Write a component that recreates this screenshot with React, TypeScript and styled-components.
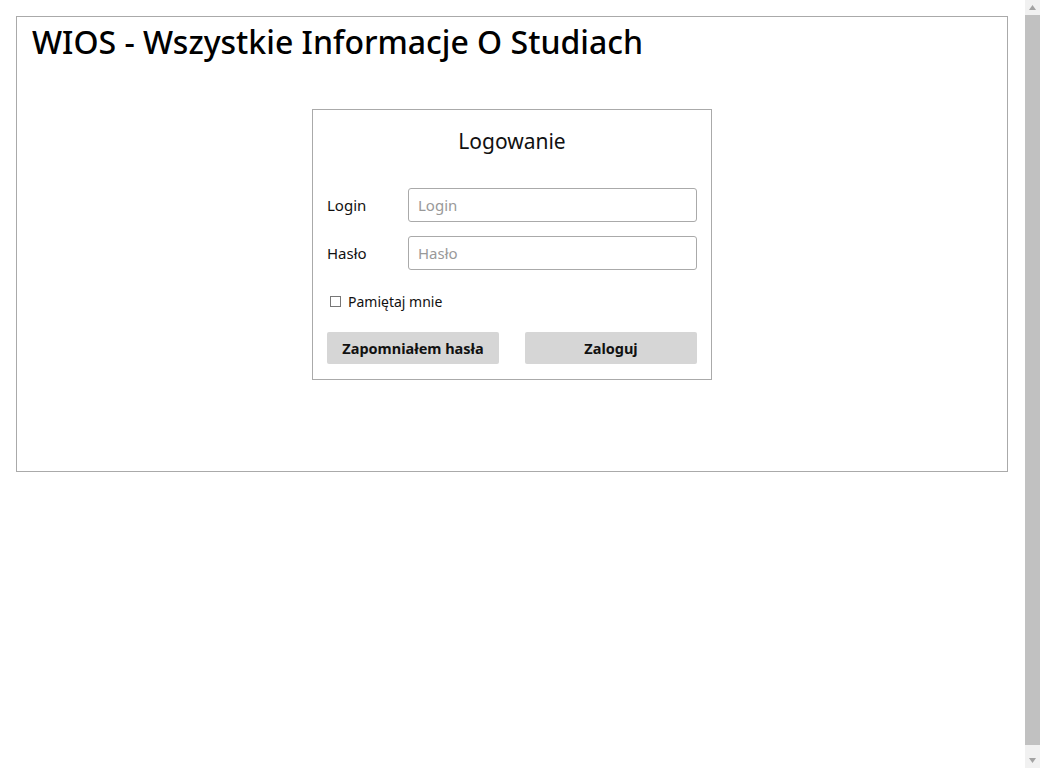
import React from 'react';
import styled, { createGlobalStyle } from 'styled-components';

const GlobalStyle = createGlobalStyle`
  html {
    overflow: hidden;
  }
  body {
    margin: 8px 24px 0 8px;
    font-family: "Noto Sans", "Open Sans", sans-serif;
    color: #111;
    background: #fff;
  }
  #root {
    min-height: 100vh;
  }
`;

const Page = styled.div`
  margin: 8px;
  border: 1px solid #aaaaaa;
  padding: 12px 15px 91px 15px;
`;

const Title = styled.h1`
  margin: 0;
  font-size: 32px;
  line-height: 26px;
  font-weight: 500;
  color: #000;
`;

const LoginCard = styled.form`
  width: 370px;
  margin: 54px auto 0 auto;
  border: 1px solid #aaaaaa;
  padding: 14px 14px 15px 14px;
  display: flex;
  flex-direction: column;
`;

const CardTitle = styled.h2`
  margin: 0 0 30px 0;
  text-align: center;
  font-size: 21px;
  line-height: 34px;
  font-weight: 400;
  color: #111;
`;

const FieldRow = styled.div`
  display: flex;
  align-items: center;
  margin-bottom: 14px;
`;

const FieldLabel = styled.label`
  width: 81px;
  font-size: 15px;
  color: #111;
`;

const TextInput = styled.input`
  flex: 1;
  height: 34px;
  box-sizing: border-box;
  border: 1px solid #aaaaaa;
  border-radius: 3px;
  padding: 0 9px;
  font-family: inherit;
  font-size: 15px;
  color: #111;
  outline: none;

  &::placeholder {
    color: #999;
  }
`;

const RememberRow = styled.label`
  display: flex;
  align-items: center;
  gap: 7px;
  margin: 8px 0 21px 3px;
  font-size: 14px;
  color: #111;
`;

const CheckBox = styled.input`
  appearance: none;
  width: 11px;
  height: 11px;
  margin: 0;
  border: 1px solid #777;
  background: #fff;
`;

const ButtonRow = styled.div`
  display: flex;
  justify-content: space-between;
`;

const ActionButton = styled.button`
  width: 172px;
  height: 32px;
  border: none;
  border-radius: 2px;
  background: #d6d6d6;
  font-family: inherit;
  font-size: 14.5px;
  font-weight: 700;
  color: #111;
  cursor: pointer;
`;

/* window scrollbar drawn over the right edge of the viewport */
const ScrollTrack = styled.div`
  position: fixed;
  top: 0;
  right: 0;
  bottom: 0;
  width: 15px;
  background: #f1f1f1;
  display: flex;
  flex-direction: column;
`;

const ScrollArrow = styled.div`
  height: 15px;
  display: flex;
  align-items: center;
  justify-content: center;
`;

const ScrollThumb = styled.div`
  flex: 1;
  margin-bottom: 8px;
  background: #c1c1c1;
`;

const Arrow = ({ down }: { down?: boolean }) => (
  <svg width="7" height="5" viewBox="0 0 7 5">
    <polygon points={down ? '0,0 7,0 3.5,5' : '3.5,0 7,5 0,5'} fill="#a3a3a3" />
  </svg>
);

export default function App() {
  return (
    <>
      <GlobalStyle />
      <Page>
        <Title>WIOS - Wszystkie Informacje O Studiach</Title>
        <LoginCard onSubmit={(e) => e.preventDefault()}>
          <CardTitle>Logowanie</CardTitle>
          <FieldRow>
            <FieldLabel htmlFor="login">Login</FieldLabel>
            <TextInput id="login" placeholder="Login" />
          </FieldRow>
          <FieldRow>
            <FieldLabel htmlFor="haslo">Hasło</FieldLabel>
            <TextInput id="haslo" type="password" placeholder="Hasło" />
          </FieldRow>
          <RememberRow>
            <CheckBox type="checkbox" />
            Pamiętaj mnie
          </RememberRow>
          <ButtonRow>
            <ActionButton type="button">Zapomniałem hasła</ActionButton>
            <ActionButton type="submit">Zaloguj</ActionButton>
          </ButtonRow>
        </LoginCard>
      </Page>
      <ScrollTrack>
        <ScrollArrow><Arrow /></ScrollArrow>
        <ScrollThumb />
        <ScrollArrow><Arrow down /></ScrollArrow>
      </ScrollTrack>
    </>
  );
}
